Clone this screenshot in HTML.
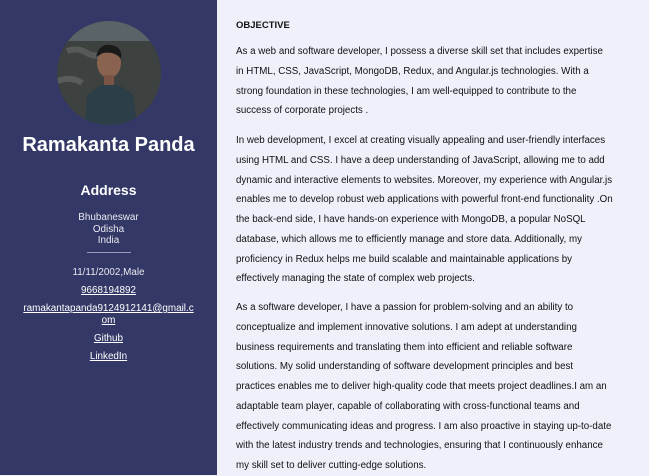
<!DOCTYPE html>
<html><head><meta charset="utf-8"><style>
*{margin:0;padding:0;box-sizing:border-box}
body{width:649px;height:475px;overflow:hidden;background:#eff0fa;font-family:"Liberation Sans",Arial,sans-serif;position:relative}
.side{position:absolute;left:0;top:0;width:217px;height:475px;background:#343866;color:#fff;text-align:center}
.av{position:absolute;left:57px;top:21px;width:104px;height:104px;border-radius:50%;overflow:hidden;background:#3b3f3f}
.name{position:absolute;left:0;width:217px;top:134px;font-size:20px;font-weight:bold}
.addr{position:absolute;left:0;width:217px;top:182px;font-size:14px;font-weight:bold}
.sm{position:absolute;left:0;width:217px;font-size:9.9px;line-height:11.5px;color:#e8e8f0}
.sm a{color:#fff;text-decoration:underline}
hr{position:absolute;left:87px;top:252px;width:44px;border:0;border-top:1px solid #9a9cb8}
.main{position:absolute;left:236px;top:0;width:410px;color:#111;font-size:9.75px}
h4{position:absolute;top:20px;font-size:9.5px;font-weight:bold}
p{position:absolute;line-height:19.75px;white-space:nowrap}
</style></head><body>
<div class="side">
<div class="av"><svg width="104" height="104" viewBox="0 0 104 104">
<rect width="104" height="104" fill="#3d4140"/>
<rect x="0" y="0" width="104" height="20" fill="#5a6468"/>
<path d="M10 30 Q20 26 30 32 T50 30" stroke="#555a58" stroke-width="6" fill="none"/>
<path d="M0 60 Q15 55 25 62" stroke="#585c5a" stroke-width="6" fill="none"/>
<path d="M28 104 L30 75 Q40 64 52 62 Q66 64 76 74 L80 104Z" fill="#2c3e48"/>
<ellipse cx="52" cy="42" rx="12" ry="15" fill="#8a6250"/>
<path d="M39 36 Q42 22 54 24 Q66 26 64 38 Q58 30 46 32Z" fill="#1a1a1a"/>
<rect x="47" y="54" width="10" height="10" fill="#7a5444"/>
</svg></div>
<div class="name">Ramakanta Panda</div>
<div class="addr">Address</div>
<div class="sm" style="top:212px">Bhubaneswar<br>Odisha<br>India</div>
<hr>
<div class="sm" style="top:267px">11/11/2002,Male</div>
<div class="sm" style="top:285px"><a>9668194892</a></div>
<div class="sm" style="top:303px"><a>ramakantapanda9124912141@gmail.c<br>om</a></div>
<div class="sm" style="top:333px"><a>Github</a></div>
<div class="sm" style="top:351px"><a>LinkedIn</a></div>
</div>
<div class="main">
<h4>OBJECTIVE</h4>
<p style="top:42px">As a web and software developer, I possess a diverse skill set that includes expertise<br>in HTML, CSS, JavaScript, MongoDB, Redux, and Angular.js technologies. With a<br>strong foundation in these technologies, I am well-equipped to contribute to the<br>success of corporate projects .</p>
<p style="top:131px">In web development, I excel at creating visually appealing and user-friendly interfaces<br>using HTML and CSS. I have a deep understanding of JavaScript, allowing me to add<br>dynamic and interactive elements to websites. Moreover, my experience with Angular.js<br>enables me to develop robust web applications with powerful front-end functionality .On<br>the back-end side, I have hands-on experience with MongoDB, a popular NoSQL<br>database, which allows me to efficiently manage and store data. Additionally, my<br>proficiency in Redux helps me build scalable and maintainable applications by<br>effectively managing the state of complex web projects.</p>
<p style="top:298px">As a software developer, I have a passion for problem-solving and an ability to<br>conceptualize and implement innovative solutions. I am adept at understanding<br>business requirements and translating them into efficient and reliable software<br>solutions. My solid understanding of software development principles and best<br>practices enables me to deliver high-quality code that meets project deadlines.I am an<br>adaptable team player, capable of collaborating with cross-functional teams and<br>effectively communicating ideas and progress. I am also proactive in staying up-to-date<br>with the latest industry trends and technologies, ensuring that I continuously enhance<br>my skill set to deliver cutting-edge solutions.</p>
</div>
</body></html>
